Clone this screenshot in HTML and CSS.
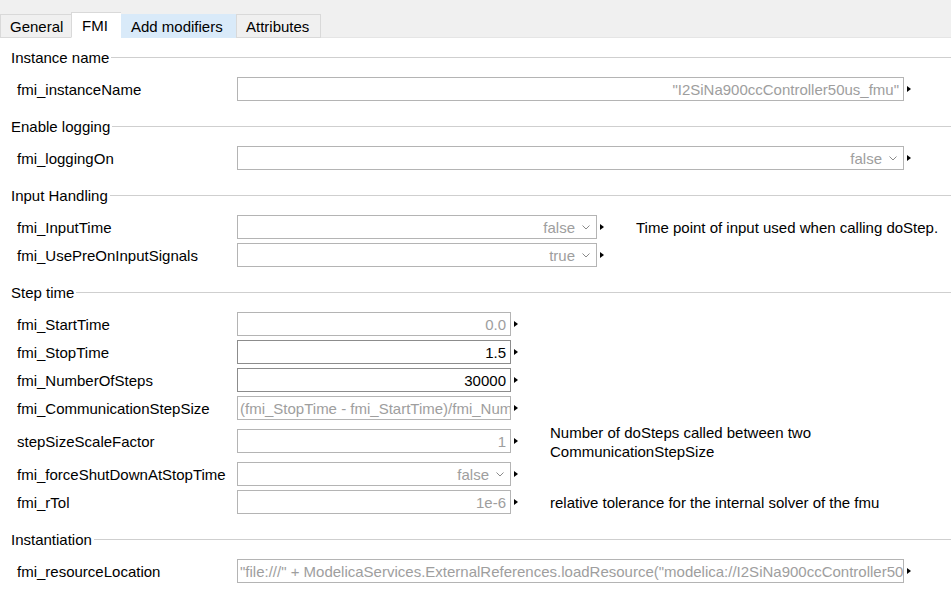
FILE: index.html
```html
<!DOCTYPE html>
<html lang="en">
<head>
    <meta charset="UTF-8">
    <title>FMI parameters</title>
    <link rel="stylesheet" href="styles.css">
</head>
<body>
    <div class="tabbar">
        <div class="tab">General</div>
        <div class="tab active">FMI</div>
        <div class="tab hover">Add modifiers</div>
        <div class="tab">Attributes</div>
        <div class="tab-rest"></div>
    </div>

    <div class="content">
        <!-- Instance name -->
        <div class="section">
            <div class="sec-title">Instance name</div>
            <div class="row">
                <span class="label">fmi_instanceName</span>
                <div class="cell">
                    <div class="field wide">"I2SiNa900ccController50us_fmu"</div>
                    <span class="arrow"></span>
                </div>
            </div>
        </div>

        <!-- Enable logging -->
        <div class="section">
            <div class="sec-title">Enable logging</div>
            <div class="row">
                <span class="label">fmi_loggingOn</span>
                <div class="cell">
                    <div class="field wide">false<svg class="chev" width="8" height="5" viewBox="0 0 8 5"><polyline points="0.5,0.5 4,4 7.5,0.5" /></svg></div>
                    <span class="arrow"></span>
                </div>
            </div>
        </div>

        <!-- Input Handling -->
        <div class="section">
            <div class="sec-title">Input Handling</div>
            <div class="row">
                <span class="label">fmi_InputTime</span>
                <div class="cell">
                    <div class="field mid">false<svg class="chev" width="8" height="5" viewBox="0 0 8 5"><polyline points="0.5,0.5 4,4 7.5,0.5" /></svg></div>
                    <span class="arrow"></span>
                    <span class="desc">Time point of input used when calling doStep.</span>
                </div>
            </div>
            <div class="row">
                <span class="label">fmi_UsePreOnInputSignals</span>
                <div class="cell">
                    <div class="field mid">true<svg class="chev" width="8" height="5" viewBox="0 0 8 5"><polyline points="0.5,0.5 4,4 7.5,0.5" /></svg></div>
                    <span class="arrow"></span>
                </div>
            </div>
        </div>

        <!-- Step time -->
        <div class="section">
            <div class="sec-title">Step time</div>
            <div class="row">
                <span class="label">fmi_StartTime</span>
                <div class="cell">
                    <div class="field small">0.0</div>
                    <span class="arrow"></span>
                </div>
            </div>
            <div class="row">
                <span class="label">fmi_StopTime</span>
                <div class="cell">
                    <div class="field small set">1.5</div>
                    <span class="arrow"></span>
                </div>
            </div>
            <div class="row">
                <span class="label">fmi_NumberOfSteps</span>
                <div class="cell">
                    <div class="field small set">30000</div>
                    <span class="arrow"></span>
                </div>
            </div>
            <div class="row">
                <span class="label">fmi_CommunicationStepSize</span>
                <div class="cell">
                    <div class="field small expr">(fmi_StopTime - fmi_StartTime)/fmi_NumberOfSteps</div>
                    <span class="arrow"></span>
                </div>
            </div>
            <div class="row">
                <span class="label">stepSizeScaleFactor</span>
                <div class="cell">
                    <div class="field small">1</div>
                    <span class="arrow"></span>
                    <span class="desc two">Number of doSteps called between two<br>CommunicationStepSize</span>
                </div>
            </div>
            <div class="row">
                <span class="label">fmi_forceShutDownAtStopTime</span>
                <div class="cell">
                    <div class="field small">false<svg class="chev" width="8" height="5" viewBox="0 0 8 5"><polyline points="0.5,0.5 4,4 7.5,0.5" /></svg></div>
                    <span class="arrow"></span>
                </div>
            </div>
            <div class="row">
                <span class="label">fmi_rTol</span>
                <div class="cell">
                    <div class="field small">1e-6</div>
                    <span class="arrow"></span>
                    <span class="desc">relative tolerance for the internal solver of the fmu</span>
                </div>
            </div>
        </div>

        <!-- Instantiation -->
        <div class="section">
            <div class="sec-title">Instantiation</div>
            <div class="row">
                <span class="label">fmi_resourceLocation</span>
                <div class="cell">
                    <div class="field wide expr">"file:///" + ModelicaServices.ExternalReferences.loadResource("modelica://I2SiNa900ccController50us_fmu/Resources")</div>
                    <span class="arrow"></span>
                </div>
            </div>
        </div>
    </div>
</body>
</html>
```

FILE: styles.css
```css
body {
    margin: 0;
    font-family: "Liberation Sans", Arial, sans-serif;
    font-size: 15px;
    color: #000;
    background: #fff;
}
.tabbar {
    display: flex;
    align-items: flex-end;
    height: 38px;
    background: #f0f0f0;
}
.tab {
    height: 24px;
    line-height: 24px;
    padding: 0 9px;
    box-sizing: border-box;
    border: 1px solid #d9d9d9;
    border-right: none;
    background: #f0f0f0;
}
.tab:first-child {
    width: 71px;
}
.tab.active {
    height: 26px;
    line-height: 26px;
    width: 50px;
    padding: 0 10px;
    background: #fff;
    border-bottom-color: #fff;
}
.tab.hover {
    width: 115px;
    background: #d9eaf9;
    border-color: #d9eaf9;
}
.tab:nth-child(4) {
    width: 85px;
    border-right: 1px solid #d9d9d9;
}
.tab-rest {
    flex: 1;
    border-bottom: 1px solid #e5e5e5;
}
.content {
    padding: 9px 0 0 11px;
}
.section {
    margin-bottom: 15px;
}
.sec-title {
    display: flex;
    align-items: center;
    height: 20px;
    margin-bottom: 10px;
}
.sec-title::after {
    content: "";
    flex: 1;
    border-top: 1px solid #cfcfcf;
    margin-left: 2px;
}
.row {
    display: grid;
    grid-template-columns: 220px auto;
    align-items: center;
    min-height: 24px;
    margin-bottom: 4px;
    padding-left: 6px;
}
.row:last-child {
    margin-bottom: 0;
}
.cell {
    display: flex;
    align-items: center;
}
.field {
    display: flex;
    align-items: center;
    justify-content: flex-end;
    height: 24px;
    box-sizing: border-box;
    padding: 0 4px;
    border: 1px solid #b4b4b4;
    background: #fff;
    color: #9e9e9e;
    white-space: nowrap;
    overflow: hidden;
}
.field.wide {
    width: 667px;
}
.field.mid {
    width: 360px;
}
.field.small {
    width: 274px;
}
.field.set {
    color: #000;
    border-color: #8c8c8c;
}
.field.expr {
    justify-content: flex-start;
    padding: 0 2px;
}
.chev {
    margin-left: 7px;
    margin-right: 2px;
    fill: none;
    stroke: #8a8a8a;
    stroke-width: 1;
}
.arrow {
    width: 0;
    height: 0;
    margin-left: 3px;
    border-left: 4px solid #000;
    border-top: 3.5px solid transparent;
    border-bottom: 3.5px solid transparent;
}
.desc {
    margin-left: 32px;
    line-height: 19px;
}
.desc.two {
    margin-top: -1px;
    margin-bottom: -3px;
}
```
